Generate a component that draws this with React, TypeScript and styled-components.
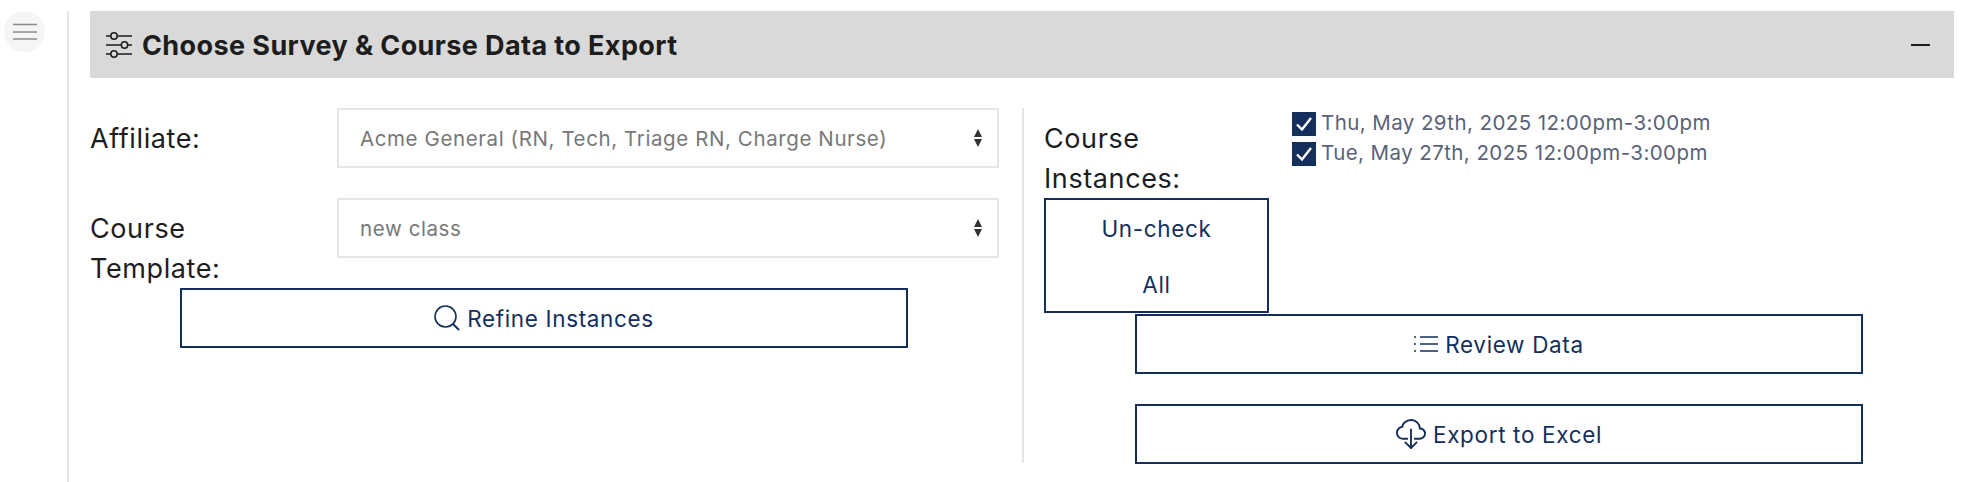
import React from "react";
import styled, { createGlobalStyle } from "styled-components";
import { BsCloudDownload } from "react-icons/bs";

const Global = createGlobalStyle`
  html, body { margin: 0; padding: 0; background: #fff; }
  body { font-family: Inter, "Liberation Sans", sans-serif; }
`;

const NAVY = "#142f5c";

const Page = styled.div`
  display: flex;
  width: 1968px;
  height: 482px;
  overflow: hidden;
  box-sizing: border-box;
  padding-top: 11px;
`;
const Rail = styled.div`
  width: 67px;
  padding-left: 4px;
  box-sizing: border-box;
  flex: none;
`;
const MenuButton = styled.button`
  width: 41px;
  height: 41px;
  border: 0;
  padding: 0;
  border-radius: 50%;
  background: #f5f5f5;
  display: flex;
  align-items: center;
  justify-content: center;
  color: #8c8c8c;
`;
const Main = styled.main`
  flex: 1;
  border-left: 2px solid #e6e6e6;
  padding: 0 14px 0 21px;
  box-sizing: border-box;
`;
const Header = styled.header`
  height: 67px;
  background: #d9d9d9;
  display: flex;
  align-items: center;
  padding: 0 24px 0 16px;
  color: #1d1d1d;
`;
const Title = styled.h1`
  flex: 1;
  margin: 2px 0 0 10px;
  font-size: 27px;
  font-weight: 700;
  letter-spacing: 0.4px;
`;
const Columns = styled.div`
  display: flex;
  margin-top: 30px;
  height: 355px;
`;
const LeftCol = styled.section`
  width: 932px;
  flex: none;
  padding-right: 23px;
  box-sizing: border-box;
`;
const RightCol = styled.section`
  flex: 1;
  border-left: 2px solid #e6e6e6;
  padding-left: 20px;
`;
const Field = styled.div`
  display: grid;
  grid-template-columns: 247px 1fr;
  height: 60px;
  margin-bottom: 30px;
`;
const Label = styled.label`
  font-size: 27px;
  line-height: 40px;
  padding-top: 11px;
  color: #1d1d1d;
  letter-spacing: 0.6px;
`;
const Select = styled.div`
  border: 2px solid #e6e6e6;
  display: flex;
  align-items: center;
  justify-content: space-between;
  padding: 0 14px 0 21px;
  box-sizing: border-box;
  height: 60px;
  font-size: 20.5px;
  letter-spacing: 0.6px;
  color: #787878;
`;
const ActionButton = styled.button<{ $indent?: number; $gap?: number }>`
  display: flex;
  align-items: center;
  justify-content: center;
  gap: 7px;
  width: 728px;
  height: 60px;
  margin-left: ${(p) => p.$indent ?? 91}px;
  margin-top: ${(p) => p.$gap ?? 0}px;
  border: 2px solid ${NAVY};
  background: #fff;
  color: ${NAVY};
  font-family: inherit;
  font-size: 22.5px;
  letter-spacing: 0.65px;
  padding: 0;
  box-sizing: border-box;
`;
const InstanceRow = styled.div`
  display: grid;
  grid-template-columns: 248px 1fr;
  height: 90px;
`;
const InstanceLabel = styled(Label)`
  width: 200px;
`;
const CheckList = styled.div`
  display: flex;
  flex-direction: column;
  padding-top: 1px;
`;
const CheckRow = styled.div`
  display: flex;
  align-items: center;
  gap: 5px;
  height: 30px;
  font-size: 20.5px;
  letter-spacing: 0.42px;
  color: #5b6277;
`;
const CheckText = styled.span`
  margin-top: -3px;
`;
const Box = styled.span`
  width: 24px;
  height: 24px;
  background: ${NAVY};
  display: flex;
  align-items: center;
  justify-content: center;
  flex: none;
`;
const UncheckButton = styled.button`
  display: block;
  width: 225px;
  height: 115px;
  border: 2px solid ${NAVY};
  background: #fff;
  color: ${NAVY};
  font-family: inherit;
  font-size: 22.5px;
  line-height: 56px;
  letter-spacing: 0.65px;
  padding: 1px 0 0;
  box-sizing: border-box;
`;

const Hamburger = () => (
  <svg width="24" height="17" viewBox="0 0 24 17" fill="none" stroke="currentColor" strokeWidth="1.6">
    <path d="M0 1.5h24M0 9h24M0 16h24" />
  </svg>
);
const Sliders = () => (
  <svg width="26" height="26" viewBox="0 0 26 26" fill="none" stroke="currentColor" strokeWidth="1.5">
    <path d="M0 4h5M11.5 4H26M0 13h15M22 13h4M0 22h5M11.5 22H26" />
    <circle cx="8" cy="4" r="3.2" />
    <circle cx="18.5" cy="13" r="3.2" />
    <circle cx="8" cy="22" r="3.2" />
  </svg>
);
const Minus = () => (
  <svg width="19" height="4" viewBox="0 0 19 4" fill="none" stroke="currentColor" strokeWidth="2">
    <path d="M0 2h19" />
  </svg>
);
const Magnifier = () => (
  <svg width="26" height="26" viewBox="0 0 26 26" fill="none" stroke="currentColor">
    <circle cx="11.5" cy="11.5" r="10.5" strokeWidth="1.6" />
    <path d="M19 19l6 6" strokeWidth="2" />
  </svg>
);
const ListLines = () => (
  <svg width="24" height="18" viewBox="0 0 24 18" fill="none" stroke="currentColor" strokeWidth="1.5">
    <path d="M6 2h18M6 9h18M6 16h18M0 2h2M0 9h2M0 16h2" />
  </svg>
);
const Arrows = () => (
  <svg width="10" height="18" viewBox="0 0 10 18" fill="#333">
    <path d="M5 0l4 8H1zM5 18l-4-8h8z" />
  </svg>
);
const Tick = () => (
  <svg width="20" height="20" viewBox="0 0 20 20" fill="none" stroke="#fff" strokeWidth="2.4">
    <path d="M3 10.5l5 5L17 4" />
  </svg>
);

export default function App() {
  return (
    <Page>
      <Global />
      <Rail>
        <MenuButton aria-label="menu">
          <Hamburger />
        </MenuButton>
      </Rail>
      <Main>
        <Header>
          <Sliders />
          <Title>Choose Survey &amp; Course Data to Export</Title>
          <Minus />
        </Header>
        <Columns>
          <LeftCol>
            <Field>
              <Label>Affiliate:</Label>
              <Select>
                Acme General (RN, Tech, Triage RN, Charge Nurse)
                <Arrows />
              </Select>
            </Field>
            <Field>
              <Label>
                Course
                <br />
                Template:
              </Label>
              <Select>
                new class
                <Arrows />
              </Select>
            </Field>
            <ActionButton $indent={90}>
              <Magnifier />
              Refine Instances
            </ActionButton>
          </LeftCol>
          <RightCol>
            <InstanceRow>
              <InstanceLabel>Course Instances:</InstanceLabel>
              <CheckList>
                <CheckRow>
                  <Box>
                    <Tick />
                  </Box>
                  <CheckText>Thu, May 29th, 2025 12:00pm-3:00pm</CheckText>
                </CheckRow>
                <CheckRow>
                  <Box>
                    <Tick />
                  </Box>
                  <CheckText>Tue, May 27th, 2025 12:00pm-3:00pm</CheckText>
                </CheckRow>
              </CheckList>
            </InstanceRow>
            <UncheckButton>
              Un-check
              <br />
              All
            </UncheckButton>
            <ActionButton $gap={1}>
              <ListLines />
              Review Data
            </ActionButton>
            <ActionButton $gap={30}>
              <BsCloudDownload size={30} />
              Export to Excel
            </ActionButton>
          </RightCol>
        </Columns>
      </Main>
    </Page>
  );
}
